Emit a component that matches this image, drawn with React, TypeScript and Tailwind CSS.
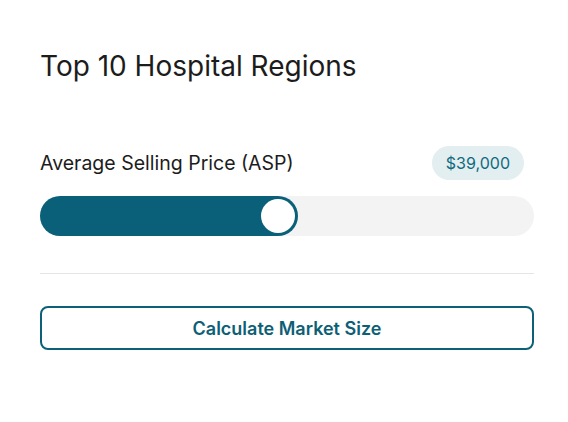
export default function App() {
  return (
    <div className="min-h-screen w-full bg-white pl-[40px] pr-[34px] pt-[48px]" style={{ fontFamily: 'Inter, "Noto Sans", sans-serif' }}>
      <h1 className="text-[28px] leading-[36px] font-normal text-[#1c1c1c]">Top 10 Hospital Regions</h1>
      <div className="mt-[62px] flex items-center justify-between">
        <span className="text-[19.5px] leading-[28px] text-[#1c1c1c]">Average Selling Price (ASP)</span>
        <span className="mr-[10px] rounded-full bg-[#e2eef0] px-[14px] py-[6px] text-[16px] leading-[22px] text-[#0f6a80]">$39,000</span>
      </div>
      <div className="relative mt-[16px] h-[40px] w-full rounded-full bg-[#f3f3f3]">
        <div className="flex h-full w-[258px] items-center justify-end rounded-full bg-[#0b6079] pr-[3px]">
          <div className="h-[34px] w-[34px] rounded-full bg-white" />
        </div>
      </div>
      <div className="mt-[37px] h-px w-full bg-[#e5e5e5]" />
      <button className="mt-[32px] flex h-[44px] w-full items-center justify-center rounded-[8px] border-2 border-[#0d6077] bg-white text-[18px] font-semibold text-[#0d5f75]">
        Calculate Market Size
      </button>
    </div>
  );
}
